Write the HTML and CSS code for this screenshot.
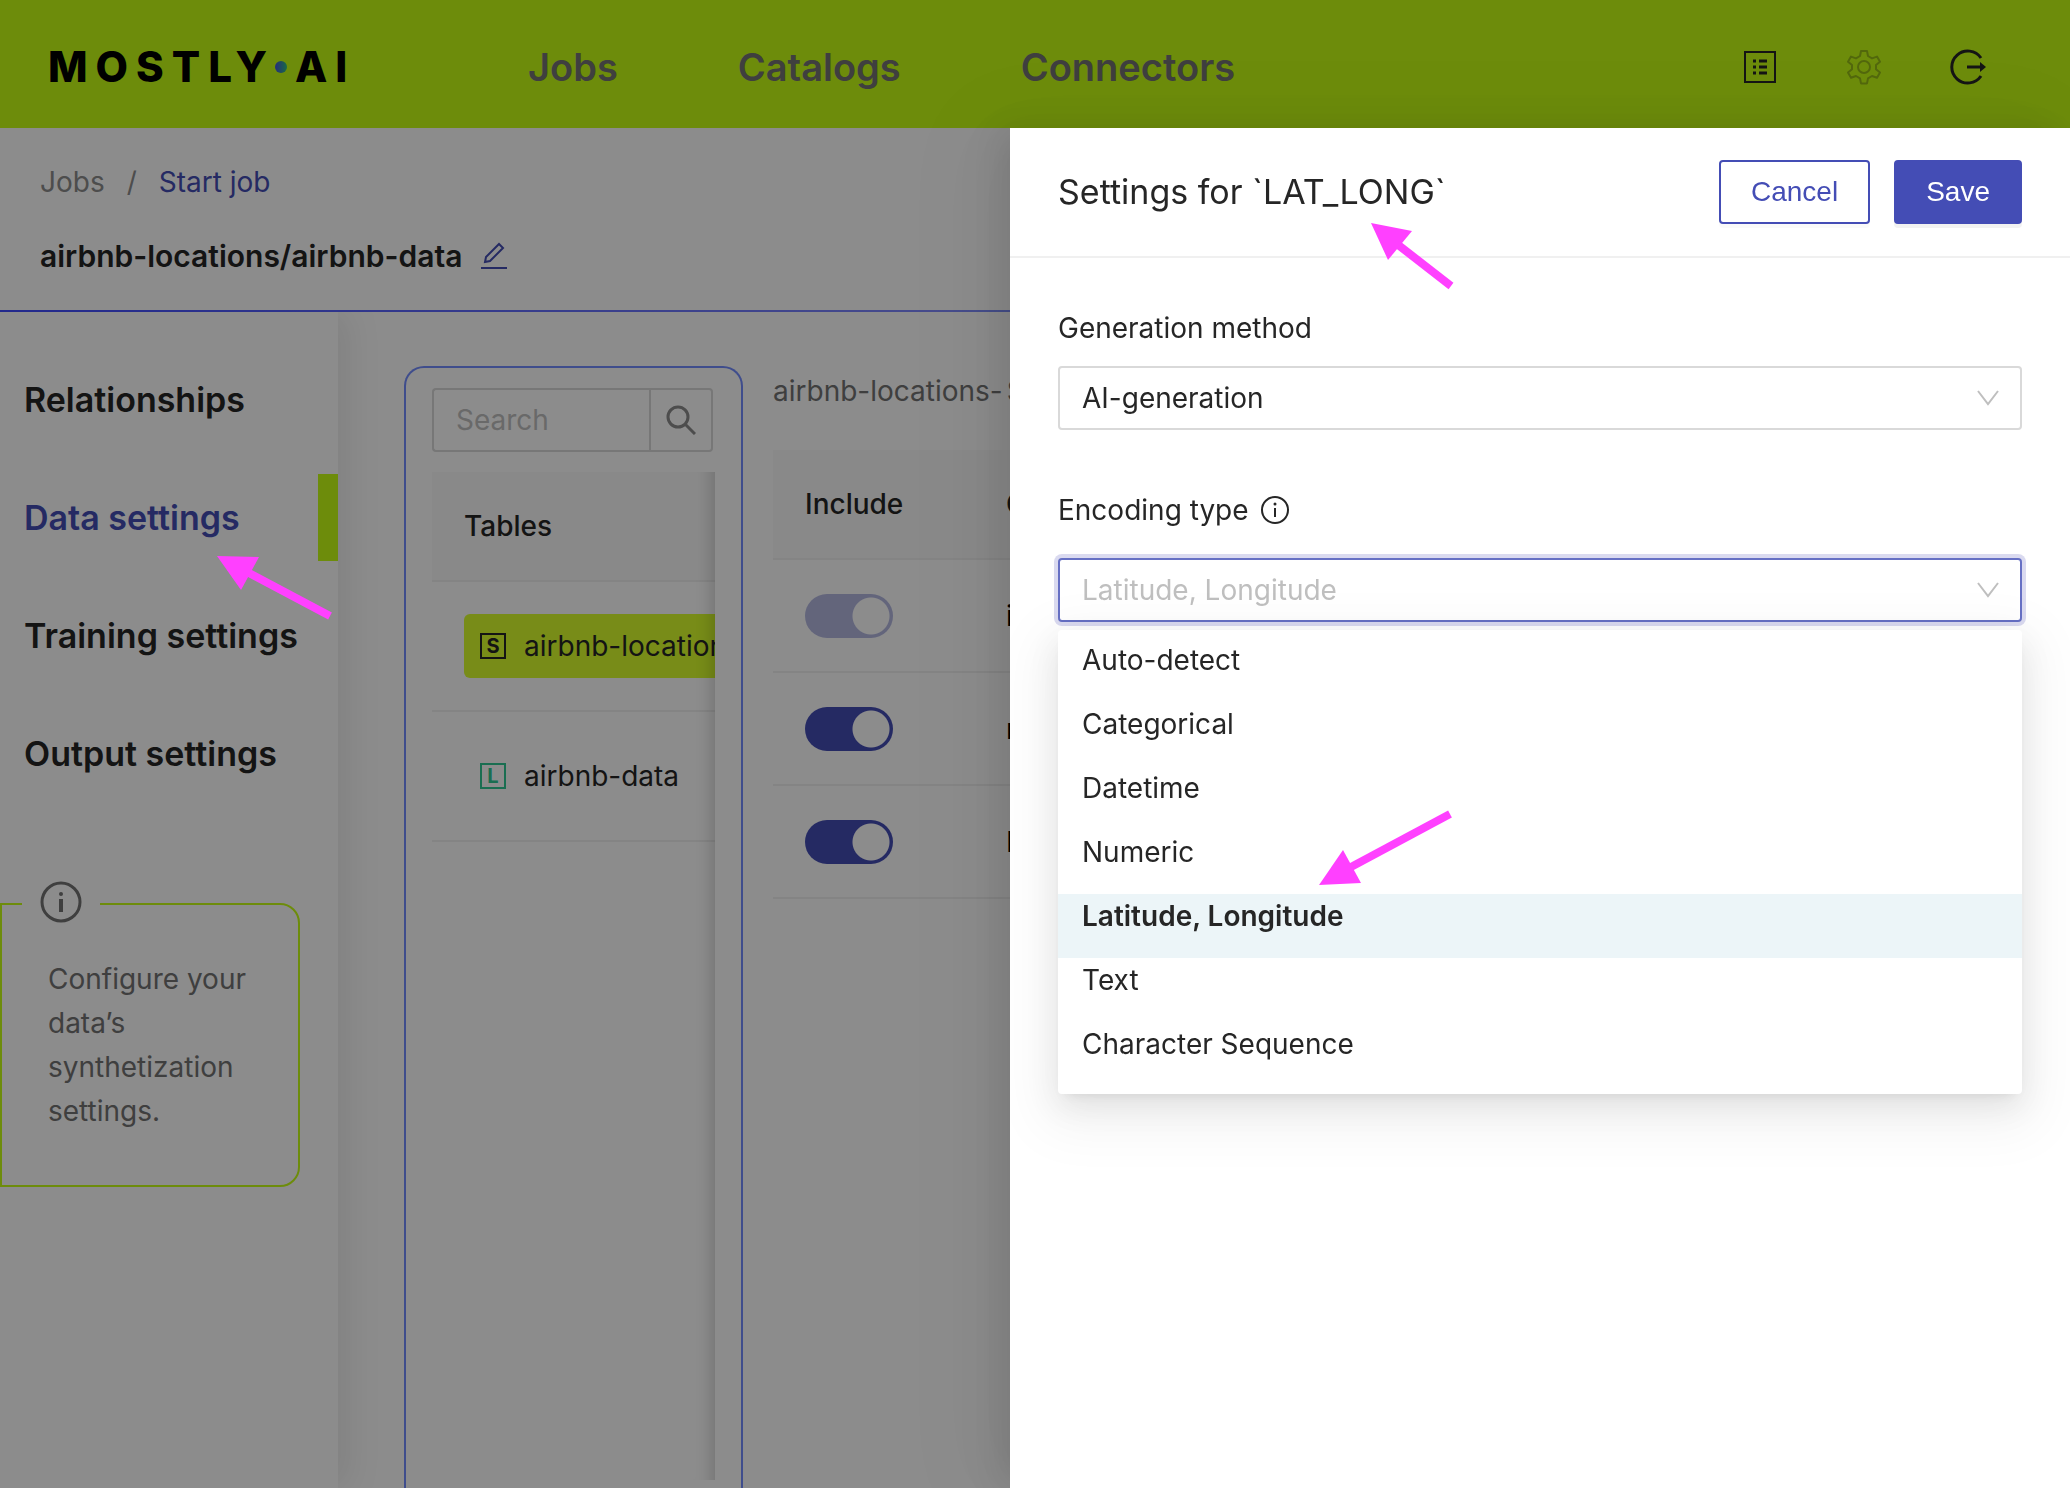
FILE: index.html
```html
<!DOCTYPE html>
<html lang="en">
<head>
<meta charset="utf-8">
<meta name="viewport" content="width=device-width, initial-scale=1">
<title>MOSTLY AI - Start job</title>
<link rel="stylesheet" href="styles.css">
</head>
<body>
<div class="app">
  <header class="topbar">
    <a class="logo" href="#" aria-label="MOSTLY AI"><span>MOSTLY</span><i class="logo-dot"></i><span>AI</span></a>
    <nav class="topnav" aria-label="Main">
      <a href="#">Jobs</a>
      <a href="#">Catalogs</a>
      <a href="#">Connectors</a>
    </nav>
    <div class="tools">
      <button class="tool" type="button" aria-label="Activity list">
        <svg width="34" height="34" viewBox="0 0 34 34" fill="none" stroke="currentColor" stroke-width="2"><rect x="1" y="2" width="30" height="30"/><path d="M15 11h8M15 17h8M15 23h8M9 11h3M9 17h3M9 23h3" stroke-width="3"/></svg>
      </button>
      <button class="tool tool-muted" type="button" aria-label="Settings">
        <svg width="36" height="36" viewBox="0 0 36 36" fill="none" stroke="currentColor" stroke-width="2" stroke-linejoin="round"><path d="M15 2h6l1 5 4 2.400 5-1.800 3 5.200-4 3.300v4.200l4 3.300-3 5.200-5-1.800-4 2.400-1 5h-6l-1-5-4-2.400-5 1.800-3-5.200 4-3.300v-4.200l-4-3.300 3-5.200 5 1.800 4-2.400z"/><circle cx="18" cy="18" r="6"/></svg>
      </button>
      <button class="tool" type="button" aria-label="Log out">
        <svg width="36" height="36" viewBox="0 0 36 36" fill="none" stroke="currentColor" stroke-width="3"><path d="M31 9A16 16 0 1 0 31 27"/><path d="M17 18h14"/><path d="M30 13l6 5-6 5z" fill="currentColor" stroke="none"/></svg>
      </button>
    </div>
  </header>

  <section class="jobhead">
    <nav class="crumbs" aria-label="Breadcrumb">
      <a href="#">Jobs</a><span>/</span><a class="current" href="#">Start job</a>
    </nav>
    <div class="jobname">
      <h1>airbnb-locations/airbnb-data</h1>
      <button class="edit" type="button" aria-label="Rename job">
        <svg width="28" height="28" viewBox="0 0 28 28" fill="none" stroke="currentColor" stroke-width="2"><path d="M1 26h26"/><path d="M6 15L19 2l4 4-13 13-5 1z"/></svg>
      </button>
    </div>
  </section>

  <div class="body">
    <aside class="sidebar">
      <nav class="steps" aria-label="Job settings">
        <a href="#">Relationships</a>
        <a class="active" href="#">Data settings</a>
        <a href="#">Training settings</a>
        <a href="#">Output settings</a>
      </nav>
      <div class="hint">
        <span class="hint-icon"><svg width="42" height="42" viewBox="0 0 42 42" fill="none" stroke="currentColor" stroke-width="3"><circle cx="21" cy="21" r="19"/><path d="M21 18v13" stroke-width="4"/><circle cx="21" cy="13" r="2" fill="currentColor" stroke="none"/></svg></span>
        <p>Configure your data’s synthetization settings.</p>
      </div>
    </aside>

    <main class="content">
      <section class="tables-card">
        <form class="search">
          <input type="search" placeholder="Search" aria-label="Search tables">
          <button type="button" aria-label="Search">
            <svg width="30" height="30" viewBox="0 0 30 30" fill="none" stroke="currentColor" stroke-width="3"><circle cx="12" cy="12" r="10"/><path d="M19 19l10 10"/></svg>
          </button>
        </form>
        <div class="tables-scroll">
          <table class="grid">
            <thead><tr><th>Tables</th></tr></thead>
            <tbody>
              <tr><td><a class="entry selected" href="#"><b class="tag">S</b>airbnb-locations</a></td></tr>
              <tr><td><a class="entry" href="#"><b class="tag tag-linked">L</b>airbnb-data</a></td></tr>
            </tbody>
          </table>
        </div>
      </section>

      <section class="columns">
        <p class="columns-title"><span>airbnb-locations-</span><span>Subject</span></p>
        <table class="grid columns-grid">
          <thead><tr><th class="col-include">Include</th><th>Column</th></tr></thead>
          <tbody>
            <tr><td><input class="switch" type="checkbox" role="switch" aria-label="Include id" checked disabled></td><td>id</td></tr>
            <tr><td><input class="switch" type="checkbox" role="switch" aria-label="Include name" checked></td><td>name</td></tr>
            <tr><td><input class="switch" type="checkbox" role="switch" aria-label="Include LAT_LONG" checked></td><td>LAT_LONG</td></tr>
          </tbody>
        </table>
      </section>
    </main>
  </div>
</div>

<div class="mask"></div>

<aside class="drawer" role="dialog" aria-labelledby="drawer-title">
  <header class="drawer-head">
    <h2 id="drawer-title">Settings for `LAT_LONG`</h2>
    <button class="btn" type="button">Cancel</button>
    <button class="btn btn-primary" type="submit">Save</button>
  </header>
  <form class="drawer-body">
    <div class="field">
      <label for="method">Generation method</label>
      <div class="select">
        <select id="method"><option>AI-generation</option></select>
        <svg class="chevron" width="22" height="16" viewBox="0 0 22 16" fill="none" stroke="currentColor" stroke-width="2"><path d="M1 1l10 13L21 1"/></svg>
      </div>
    </div>
    <div class="field">
      <div class="label-row">
        <label for="encoding">Encoding type</label>
        <svg width="28" height="28" viewBox="0 0 28 28" fill="none" stroke="currentColor" stroke-width="2"><circle cx="14" cy="14" r="13"/><path d="M14 12v9"/><circle cx="14" cy="8" r="1.500" fill="currentColor" stroke="none"/></svg>
      </div>
      <div class="select open">
        <select id="encoding"><option>Latitude, Longitude</option></select>
        <svg class="chevron" width="22" height="16" viewBox="0 0 22 16" fill="none" stroke="currentColor" stroke-width="2"><path d="M1 1l10 13L21 1"/></svg>
        <ul class="menu" role="listbox" aria-label="Encoding type">
          <li role="option">Auto-detect</li>
          <li role="option">Categorical</li>
          <li role="option">Datetime</li>
          <li role="option">Numeric</li>
          <li role="option" aria-selected="true">Latitude, Longitude</li>
          <li role="option">Text</li>
          <li role="option">Character Sequence</li>
        </ul>
      </div>
    </div>
  </form>
</aside>

<svg class="pointer pointer-step" width="118" height="66" viewBox="0 0 118 66"><path d="M0 1L42 2 24 35z" fill="currentColor"/><path d="M32 18l81 43" stroke="currentColor" stroke-width="8"/></svg>
<svg class="pointer pointer-title" width="86" height="68" viewBox="0 0 86 68"><path d="M0 0L41 8 17 37z" fill="currentColor"/><path d="M26 21l54 42" stroke="currentColor" stroke-width="8"/></svg>
<svg class="pointer pointer-option" width="136" height="78" viewBox="0 0 136 78"><path d="M0 75L24 40 42 73z" fill="currentColor"/><path d="M32 57L131 4" stroke="currentColor" stroke-width="8"/></svg>
</body>
</html>
```

FILE: styles.css
```css
* { box-sizing: border-box; }

body {
  margin: 0;
  height: 100vh;
  overflow: hidden;
  font-family: Inter, "Liberation Sans", sans-serif;
  font-size: 28px;
  line-height: 44px;
  color: #262626;
  background: #fff;
}

a { color: inherit; text-decoration: none; }
h1, h2, p, ul { margin: 0; padding: 0; }
button, input, select { font: inherit; color: inherit; }
svg { display: block; flex: none; }

.app { display: flex; flex-direction: column; height: 100%; }

/* Top bar */
.topbar {
  flex: none;
  display: flex;
  align-items: center;
  height: 128px;
  padding: 6px 84px 0 48px;
  background: #c6ff14;
}
.logo {
  display: flex;
  align-items: center;
  width: 480px;
  font-size: 42px;
  font-weight: 800;
  letter-spacing: 8px;
  color: #000;
}
.logo-dot {
  width: 12px;
  height: 12px;
  margin-right: 8px;
  border-radius: 50%;
  background: linear-gradient(90deg, #4454e0, #30c080);
}
.topnav {
  flex: 1;
  display: flex;
  gap: 120px;
  font-size: 38px;
  line-height: 42px;
  font-weight: 600;
  color: #737373;
}
.tools { display: flex; gap: 68px; }
.tool, .edit { padding: 0; border: 0; background: none; color: #262626; }
.tool-muted { color: #96be16; }

/* Job header */
.jobhead {
  flex: none;
  height: 184px;
  padding: 32px 40px 0;
  border-bottom: 2px solid;
  border-image: linear-gradient(90deg, #3f4bff, #8089ff 45%, #56c8a8) 1;
}
.crumbs { display: flex; gap: 22px; color: #8c8c8c; }
.crumbs .current, .edit { color: #444db5; }
.jobname { display: flex; align-items: center; gap: 18px; margin-top: 30px; }
.jobname h1 { font-size: 30px; font-weight: 600; }

/* Sidebar */
.body { flex: 1; display: flex; min-height: 0; }
.sidebar {
  flex: none;
  width: 338px;
  padding-top: 44px;
  box-shadow: 12px 0 32px rgba(0, 0, 0, .08);
  clip-path: inset(0 -60px 0 0);
}
.steps { display: flex; flex-direction: column; gap: 31px; }
.steps a {
  display: flex;
  align-items: center;
  height: 87px;
  padding-left: 24px;
  border-right: 20px solid transparent;
  font-size: 34px;
  font-weight: 600;
  white-space: nowrap;
}
.steps .active { color: #444db5; border-right-color: #c6ff14; }
.hint {
  position: relative;
  width: 300px;
  margin-top: 106px;
  padding: 52px 46px;
  border: 2px solid #c6ff14;
  border-radius: 0 20px 20px 0;
  color: #737373;
}
.hint-icon {
  position: absolute;
  top: -24px;
  left: 20px;
  padding: 0 18px;
  background: #fff;
}

/* Main content */
.content { flex: 1; display: flex; gap: 30px; min-width: 0; padding: 54px 0 0 66px; }
.tables-card {
  flex: none;
  width: 339px;
  padding: 20px 26px 8px;
  border: 2px solid #748dff;
  border-bottom: 0;
  border-radius: 20px 20px 0 0;
  display: flex;
  flex-direction: column;
  gap: 20px;
}
.search { display: flex; flex: none; width: 281px; }
.search input {
  flex: 1;
  min-width: 0;
  height: 64px;
  padding: 0 22px;
  border: 2px solid #d9d9d9;
  border-right: 0;
  border-radius: 4px 0 0 4px;
  background: #fff;
}
.search input::placeholder { color: #bfbfbf; opacity: 1; }
.search button {
  display: grid;
  place-items: center;
  width: 64px;
  padding: 0;
  border: 2px solid #d9d9d9;
  border-radius: 0 4px 4px 0;
  background: #fff;
  color: #8c8c8c;
}
.tables-scroll { position: relative; flex: 1; overflow: hidden; }
.tables-scroll::after {
  content: "";
  position: absolute;
  inset: 0 0 0 auto;
  width: 60px;
  box-shadow: inset -20px 0 16px -16px rgba(0, 0, 0, .18);
}

.grid { width: 100%; border-collapse: separate; border-spacing: 0; }
.grid th {
  height: 110px;
  padding: 0 32px;
  background: #fafafa;
  border-bottom: 2px solid #f0f0f0;
  font-weight: 500;
  text-align: left;
}
.grid td { height: 130px; padding: 0 0 0 32px; border-bottom: 2px solid #f0f0f0; }
.entry {
  display: flex;
  align-items: center;
  gap: 18px;
  width: 360px;
  height: 64px;
  padding-left: 16px;
  border-radius: 6px;
  white-space: nowrap;
}
.selected { background: #daff2c; }
.tag {
  width: 26px;
  height: 26px;
  border: 2px solid;
  font-size: 20px;
  line-height: 22px;
  font-weight: 700;
  text-align: center;
}
.tag-linked { color: #30c894; }

.columns { flex: 1; min-width: 0; overflow: hidden; }
.columns-title { display: flex; gap: 4px; margin: 3px 0 37px; color: #737373; white-space: nowrap; }
.columns-grid td { height: 113px; padding-top: 1px; }
.columns-grid td + td { padding-left: 32px; color: #000; }
.col-include { width: 201px; }
.switch {
  appearance: none;
  display: block;
  width: 88px;
  height: 44px;
  margin: 0;
  border-radius: 22px;
  background: radial-gradient(circle at 66px 22px, #fff 18px, #444db5 19px);
}
.switch:disabled { background: radial-gradient(circle at 66px 22px, #fff 18px, #b4b8e1 19px); }

/* Drawer */
.mask { position: fixed; inset: 0; background: rgba(0, 0, 0, .45); }
.drawer {
  position: fixed;
  top: 128px;
  right: 0;
  bottom: 0;
  width: 1060px;
  max-width: 100%;
  background: #fff;
  box-shadow: -12px 0 32px rgba(0, 0, 0, .08), -18px 0 56px rgba(0, 0, 0, .05), -24px 0 96px 32px rgba(0, 0, 0, .03);
}
.drawer-head {
  display: flex;
  align-items: center;
  gap: 24px;
  height: 130px;
  padding: 0 48px;
  border-bottom: 2px solid #f0f0f0;
}
.drawer-head h2 { flex: 1; font-size: 34px; font-weight: 400; }
.btn {
  height: 64px;
  padding: 0 30px;
  border: 2px solid #444db5;
  border-radius: 4px;
  background: #fff;
  color: #444db5;
  font-family: "Liberation Sans", Arial, sans-serif;
  box-shadow: 0 4px 0 rgba(0, 0, 0, .02);
}
.btn-primary { background: #444db5; color: #fff; box-shadow: 0 4px 0 rgba(0, 0, 0, .05); }
.drawer-body { display: flex; flex-direction: column; gap: 58px; padding: 48px; }
.field { display: flex; flex-direction: column; gap: 16px; }
.label-row { display: flex; align-items: center; gap: 12px; margin-bottom: 10px; }
.select { position: relative; }
.select select {
  appearance: none;
  display: block;
  width: 100%;
  height: 64px;
  padding: 0 22px;
  border: 2px solid #d9d9d9;
  border-radius: 4px;
  background: #fff;
}
.chevron { position: absolute; top: 24px; right: 23px; color: #bfbfbf; }
.open select { border-color: #6670c4; box-shadow: 0 0 0 4px #dadaf0; color: #bfbfbf; }
.menu {
  position: absolute;
  top: 72px;
  left: 0;
  right: 0;
  padding: 8px 0;
  list-style: none;
  background: #fff;
  border-radius: 4px;
  box-shadow: 0 6px 12px -8px rgba(0, 0, 0, .12), 0 12px 32px rgba(0, 0, 0, .08), 0 18px 56px 16px rgba(0, 0, 0, .05);
}
.menu li { height: 64px; padding: 0 24px; }
.menu [aria-selected="true"] { background: #ecf5f8; font-weight: 600; }

/* Callout arrows, laid over the screen */
.pointer { position: absolute; color: #ff40ff; }
.pointer-step { left: 217px; top: 555px; }
.pointer-title { left: 1371px; top: 223px; }
.pointer-option { left: 1319px; top: 810px; }
```
